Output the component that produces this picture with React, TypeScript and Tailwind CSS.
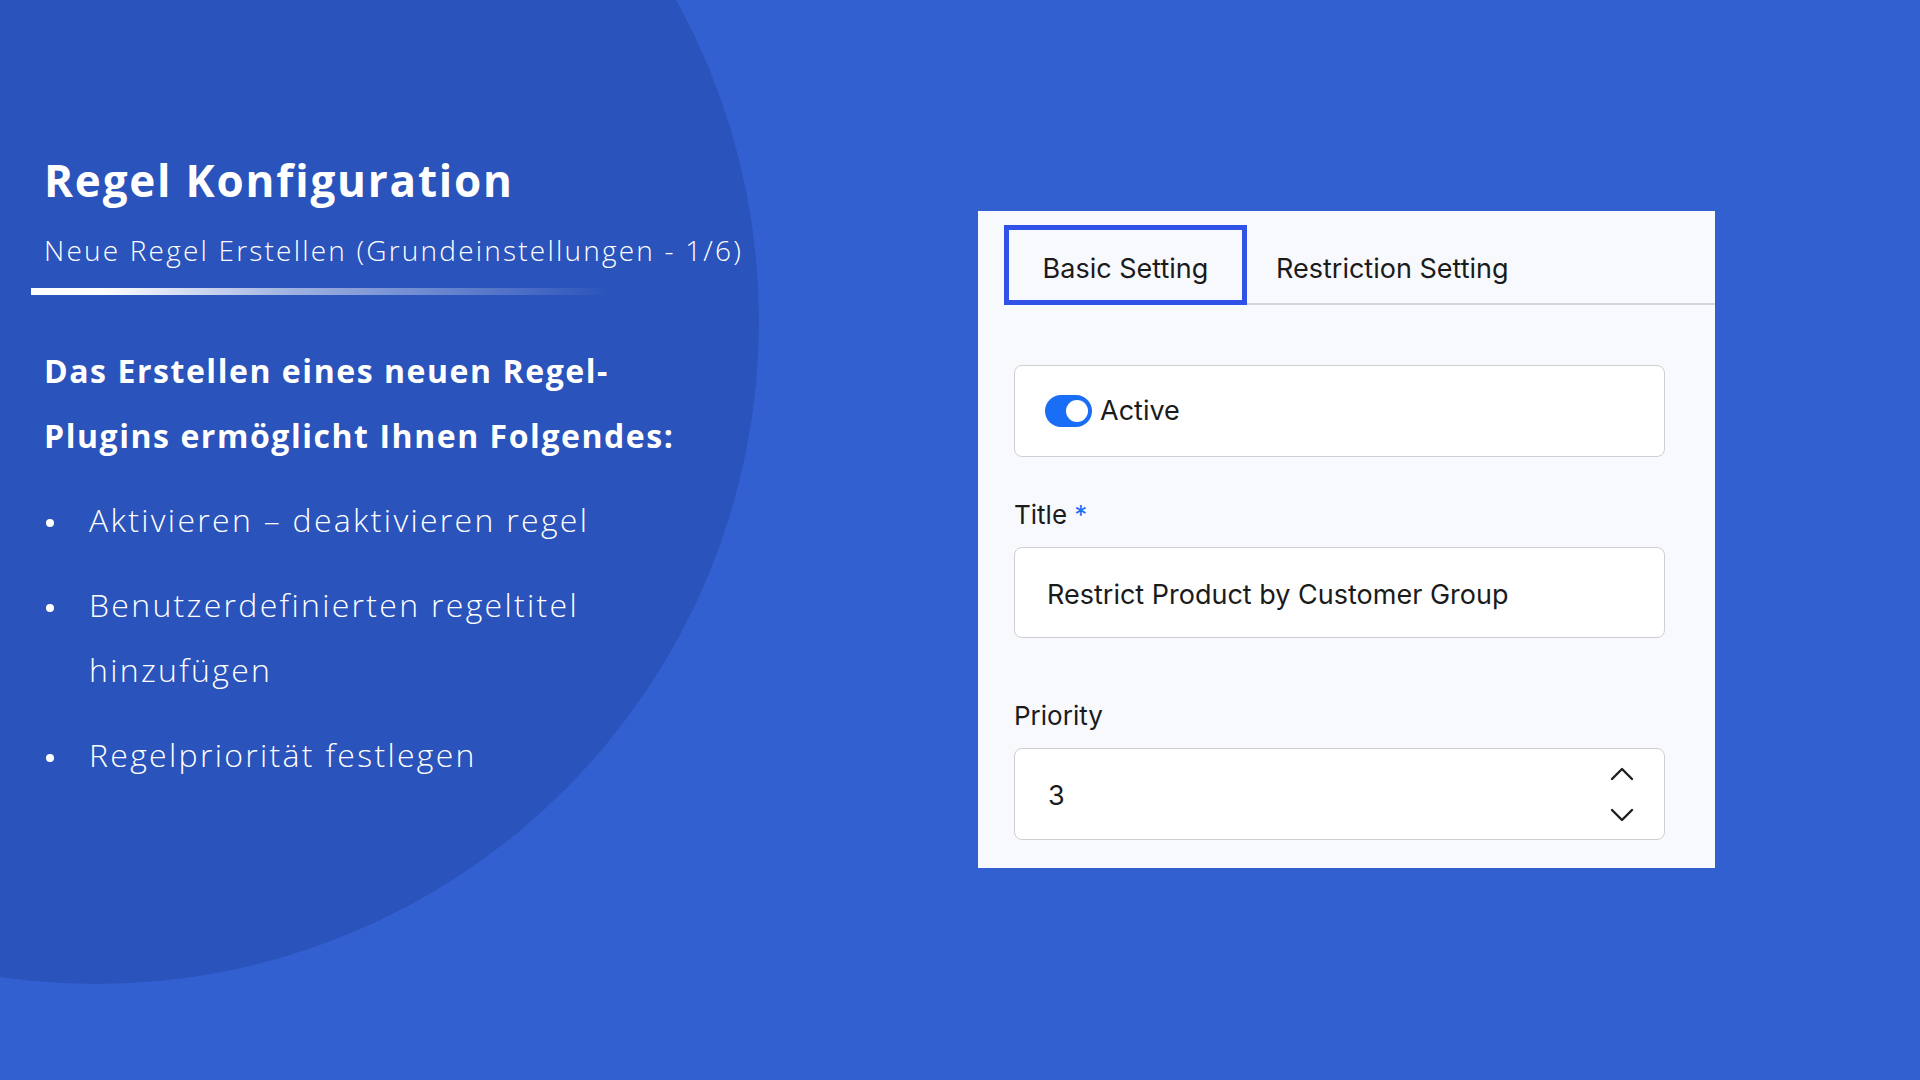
import React from "react";

function Chevron({ up }: { up?: boolean }) {
  return (
    <svg width="24" height="14" viewBox="0 0 24 14" fill="none">
      {up ? (
        <polyline points="2,12 12,2 22,12" stroke="#1f1f1f" strokeWidth="2.4" strokeLinecap="round" strokeLinejoin="round" />
      ) : (
        <polyline points="2,2 12,12 22,2" stroke="#1f1f1f" strokeWidth="2.4" strokeLinecap="round" strokeLinejoin="round" />
      )}
    </svg>
  );
}

function Bullet() {
  return (
    <span className="w-[45px] shrink-0 flex items-center h-[65px]">
      <span className="mt-[6px] w-[8px] h-[8px] rounded-full bg-white ml-[2px]" />
    </span>
  );
}

export default function App() {
  const left = "font-['Open_Sans','Lato',sans-serif]";
  const ui = "font-['Inter','Roboto',sans-serif]";
  return (
    <div className="relative w-[1920px] h-[1080px] overflow-hidden bg-[#3360d1]">
      <div className="absolute left-[-567px] top-[-342px] w-[1326px] h-[1326px] rounded-full bg-[#2a53bb]" />
      <div className="relative flex">
        {/* Left column */}
        <div className={`w-[978px] pt-[154px] text-white ${left}`}>
          <div className="pl-[44px]">
            <h1 className="text-[44px] leading-[52px] font-bold tracking-[1.8px]">Regel Konfiguration</h1>
            <div className="mt-[26px] text-[28px] leading-[36px] font-light tracking-[2.2px]">
              Neue Regel Erstellen (Grundeinstellungen - 1/6)
            </div>
          </div>
          <div className="ml-[31px] mt-[20px] w-[580px] h-[7px] bg-[linear-gradient(to_right,#ffffff_0%,#ffffff_12%,rgba(255,255,255,0.55)_45%,rgba(255,255,255,0)_100%)]" />
          <div className="pl-[44px]">
            <p className="mt-[43px] text-[32px] leading-[65px] font-bold tracking-[1.55px]">
              Das Erstellen eines neuen Regel-
              <br />
              Plugins ermöglicht Ihnen Folgendes:
            </p>
            <ul className="mt-[19px] flex flex-col gap-[20px] text-[32px] leading-[65px] font-light tracking-[2.3px]">
              <li className="flex">
                <Bullet />
                <span>Aktivieren – deaktivieren regel</span>
              </li>
              <li className="flex">
                <Bullet />
                <span>
                  Benutzerdefinierten regeltitel
                  <br />
                  hinzufügen
                </span>
              </li>
              <li className="flex">
                <Bullet />
                <span>Regelpriorität festlegen</span>
              </li>
            </ul>
          </div>
        </div>

        {/* Right panel */}
        <div className={`mt-[211px] w-[737px] bg-[#f8f9fd] pb-[28px] text-[#1b1b1b] ${ui}`}>
          <div className="flex items-end pt-[14px] pl-[26px]">
            <div className="w-[243px] h-[80px] border-[5px] border-[#3152e6] flex items-center justify-center pt-[8px] text-[27px]">
              Basic Setting
            </div>
            <div className="flex-1 h-[80px] border-b-2 border-[#d3d6dc] flex items-center pl-[29px] pt-[10px] text-[27px]">
              Restriction Setting
            </div>
          </div>

          <div className="pl-[36px] pr-[50px]">
            <div className="mt-[60px] h-[92px] rounded-[8px] border-[1.5px] border-[#cfcfd2] bg-white flex items-center pl-[30px]">
              <div className="w-[47px] h-[32px] rounded-full bg-[#1a6df5] flex items-center justify-end pr-[4px]">
                <div className="w-[22px] h-[22px] rounded-full bg-white" />
              </div>
              <span className="ml-[8px] text-[27px]">Active</span>
            </div>

            <div className="mt-[42px] text-[26px] leading-[32px]">
              Title <span className="text-[#1a6df5]">*</span>
            </div>
            <div className="mt-[16px] h-[91px] rounded-[8px] border-[1.5px] border-[#cfcfd2] bg-white flex items-center pl-[32px] pt-[5px] text-[27px]">
              Restrict Product by Customer Group
            </div>

            <div className="mt-[62px] text-[26px] leading-[32px]">Priority</div>
            <div className="mt-[16px] h-[92px] rounded-[8px] border-[1.5px] border-[#cfcfd2] bg-white flex items-center justify-between pl-[33px] pr-[30px] text-[27px]">
              <span className="pt-[5px]">3</span>
              <div className="flex flex-col gap-[27px]">
                <Chevron up />
                <Chevron />
              </div>
            </div>
          </div>
        </div>
      </div>
    </div>
  );
}
